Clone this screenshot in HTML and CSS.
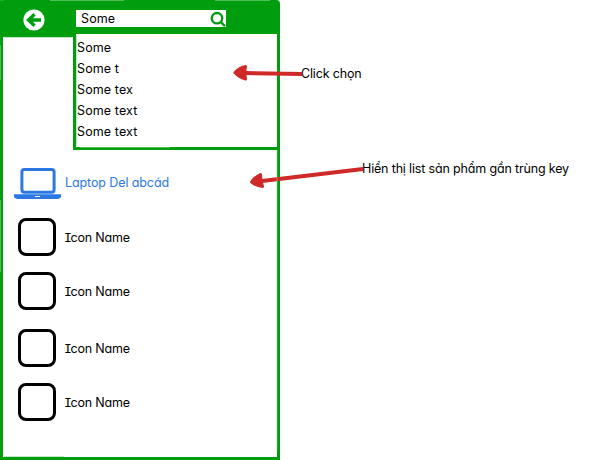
FILE: index.html
```html
<!DOCTYPE html>
<html lang="vi">
<head>
<meta charset="utf-8">
<title>Search</title>
<link rel="stylesheet" href="styles.css">
</head>
<body>
<main class="board">
  <section class="phone">
    <header class="bar">
      <svg class="back" viewBox="0 0 22 22"><circle cx="11" cy="11" r="10.6" fill="#fff"/><path d="M18 11H6M11.5 5.2L5.5 11l6 5.8" fill="none" stroke="#009e0f" stroke-width="3.3"/></svg>
      <div class="search"><span class="some">Some</span>
        <svg class="lens" viewBox="0 0 16 16"><circle cx="7" cy="7.2" r="5.2"/><path d="M10.8 11L15 15.2"/></svg>
      </div>
    </header>
    <ul class="suggest">
      <li>Some</li>
      <li>Some t</li>
      <li>Some tex</li>
      <li>Some text</li>
      <li>Some text</li>
    </ul>
    <div class="results">
      <div class="item laptop">
        <svg class="pc" viewBox="0 0 48 32"><rect x="7.9" y="1.5" width="32.2" height="22.8" rx="2.5" fill="none" stroke="#2b78e4" stroke-width="3"/><path d="M0 26.300h47v2q-.5 2.700-4 2.700H4q-3.500 0-4-2.700z" fill="#2b78e4"/><path d="M21 28.500h5" stroke="#fff" stroke-width="1"/></svg>
        <span>Laptop Del abcád</span>
      </div>
      <div class="item"><i class="box"></i><span><b>I</b>con Name</span></div>
      <div class="item"><i class="box"></i><span><b>I</b>con Name</span></div>
      <div class="item low"><i class="box"></i><span><b>I</b>con Name</span></div>
      <div class="item"><i class="box"></i><span><b>I</b>con Name</span></div>
    </div>
  </section>
  <aside class="notes">
    <p class="note click">Click chọn</p>
    <p class="note list">Hiển thị list sản phẩm gần trùng key</p>
  </aside>
  <svg class="arrows" viewBox="0 0 591 460">
    <g fill="none" stroke="#cf2a27" stroke-width="4"><path d="M302 74L245 73M363 169L262 181"/></g>
    <g fill="#cf2a27" stroke="#cf2a27" stroke-width="3" stroke-linejoin="round"><path d="M235 72.700Q239 68 245.500 66.500L244.500 72.500L245.500 79Q239 77 235 72.700zM251.500 182Q255 177 260.500 174.500L261 181L262.500 186.500Q256 186 251.500 182z"/></g>
  </svg>
  <svg class="edges" viewBox="0 0 591 460"><path d="M0 0h4M50 .5h74M215 .5h55M.5 45v35M.5 200v72M4 37.500h68M76.500 36v110M80 147.500h90M277 150v300M4 456.500h60"/></svg>
</main>
</body>
</html>
```
FILE: styles.css
```css
* { box-sizing: border-box; }
body { margin: 0; background: #fff; color: #000; font: 12.5px/21px Inter, "Noto Sans", sans-serif; font-feature-settings: "cv11" 1; }
.board { position: relative; display: flex; width: 591px; height: 460px; overflow: hidden; }
.phone { display: flex; flex-direction: column; width: 280px; height: 460px; border: solid #009e0f; border-width: 0 3px 3px; border-top-right-radius: 4px; background: #fff; }
.bar { display: flex; align-items: flex-start; height: 37px; padding: 10px 0 0 20px; background: #009e0f; flex: none; }
.back { width: 22px; height: 22px; margin-top: -1px; }
.search { display: flex; justify-content: space-between; width: 150px; height: 17px; margin-left: 31px; padding-left: 5px; background: #fff; line-height: 17px; }
.lens { width: 16px; height: 16px; margin-top: 1px; fill: none; stroke: #009e0f; stroke-width: 2.4; }
.some, .suggest { letter-spacing: .12px; }
.suggest { list-style: none; width: 207px; height: 116px; margin: -3px -3px 0 70px; padding: 3px 0 0 1px; border: solid #009e0f; border-width: 0 3px 3px; background: #fff; flex: none; }
.suggest li { height: 21px; white-space: pre; }
.results { display: flex; flex-direction: column; padding: 15px 0 0 11px; letter-spacing: -.2px; }
.item { display: flex; align-items: center; height: 54px; }
.item.laptop { height: 34px; margin-bottom: 11px; color: #2b78e4; letter-spacing: -.1px; }
.item.low { margin-top: 3px; }
.pc { width: 48px; height: 32px; margin: 3px 3px 0 0; }
.box { width: 38px; height: 38px; margin: 0 9px 0 4px; border: 3px solid #000; border-radius: 8px; }
.item b { font: 13px "Liberation Mono", monospace; margin: 0 -1px; }
.notes { display: flex; flex-direction: column; padding: 63px 0 0 21px; white-space: nowrap; letter-spacing: -.16px; }
.note { margin: 0; height: 21px; }
.list { margin: 74px 0 0 61px; }
.arrows, .edges { position: absolute; inset: 0; width: 591px; height: 460px; }
.edges { fill: none; stroke: #8fd596; stroke-width: 1; opacity: .55; }
```
